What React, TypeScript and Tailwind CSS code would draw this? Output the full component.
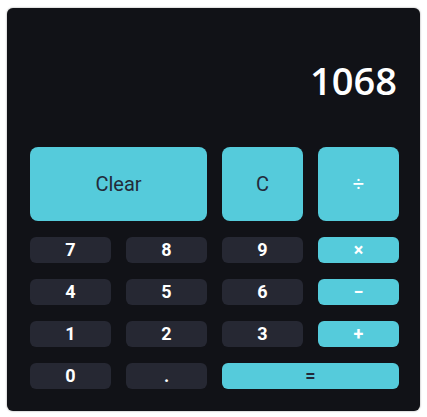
import { useState } from "react";

type Key = { label: string; kind: "num" | "op" | "fn"; span?: string; dark?: boolean };

const TOP: Key[] = [
  { label: "Clear", kind: "fn", span: "col-span-2", dark: true },
  { label: "C", kind: "fn", dark: true },
  { label: "÷", kind: "op" },
];

const REST: Key[] = [
  { label: "7", kind: "num" },
  { label: "8", kind: "num" },
  { label: "9", kind: "num" },
  { label: "×", kind: "op" },
  { label: "4", kind: "num" },
  { label: "5", kind: "num" },
  { label: "6", kind: "num" },
  { label: "−", kind: "op" },
  { label: "1", kind: "num" },
  { label: "2", kind: "num" },
  { label: "3", kind: "num" },
  { label: "+", kind: "op" },
  { label: "0", kind: "num" },
  { label: ".", kind: "num" },
  { label: "=", kind: "op", span: "col-span-2", dark: true },
];

export default function App() {
  const [value] = useState("1068");

  return (
    <div className="min-h-screen bg-white pl-[7px] pt-[8px] font-['Roboto',sans-serif]">
      <div className="w-[413px] rounded-md bg-[#111217] pl-[23px] pr-[21px] pt-[46px] pb-[22px] shadow-[0_0_2px_rgba(0,0,0,0.45)]">
        {/* display */}
        <div className="h-[52px] pr-[2px] text-right font-['Open_Sans',sans-serif] text-[38px] font-semibold leading-[52px] text-white">
          {value}
        </div>

        <div className="mt-[41px] grid grid-cols-[repeat(4,81px)] gap-x-[15px] gap-y-[16px]">
          {TOP.map((k) => (
            <button
              key={k.label}
              className={`${k.span ?? ""} flex h-[74px] items-center justify-center rounded-lg bg-[#55cbdb] text-xl font-normal ${
                k.dark ? "text-[#232a3a]" : "text-white"
              }`}
            >
              {k.label}
            </button>
          ))}
          {REST.map((k) => (
            <button
              key={k.label}
              className={`${k.span ?? ""} flex h-[26px] items-center justify-center rounded-md text-lg font-bold leading-none ${
                k.kind === "num" ? "bg-[#262833] text-white" : "bg-[#55cbdb]"
              } ${k.kind === "op" ? (k.dark ? "text-[#232a3a]" : "text-white") : ""}`}
            >
              {k.label}
            </button>
          ))}
        </div>
      </div>
    </div>
  );
}
